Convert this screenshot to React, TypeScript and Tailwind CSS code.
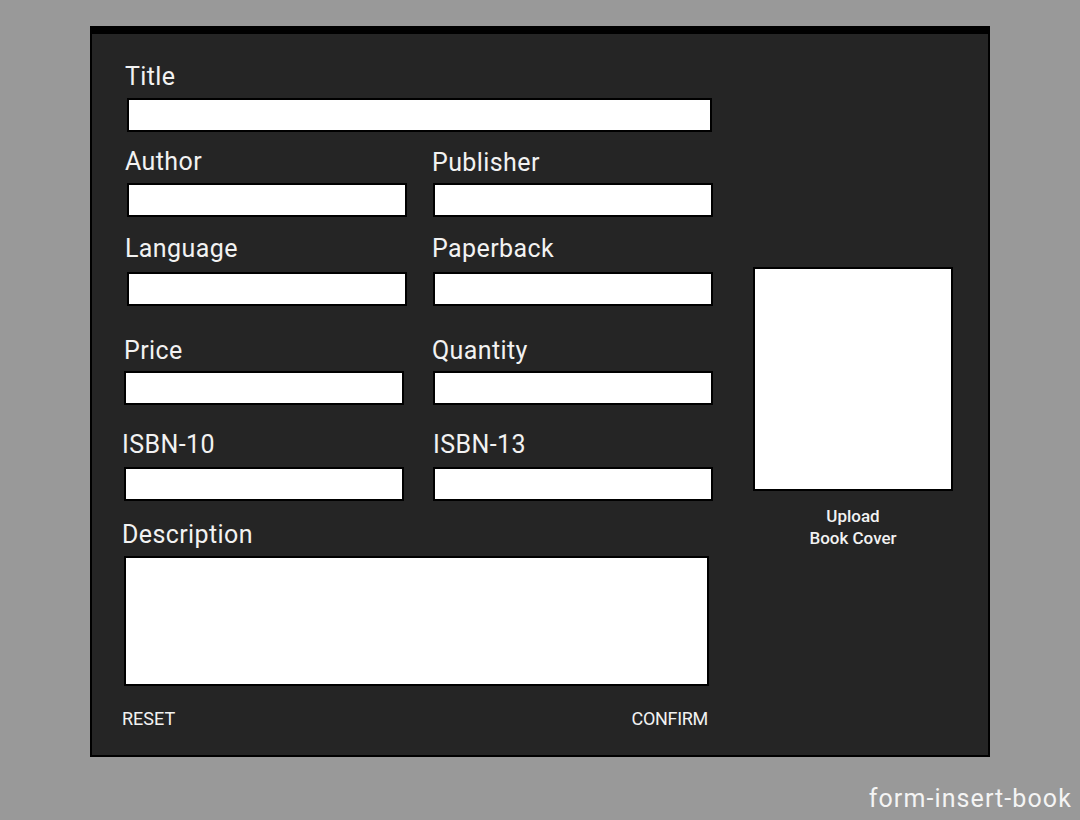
import React from 'react';

const font = { fontFamily: 'Roboto, "Liberation Sans", sans-serif' };

const labelCls = 'block text-[25px] leading-[28px] tracking-[0.4px] text-[#f2f2f2]';
const inputCls = 'block h-[34px] border-2 border-black bg-white outline-none';

const App: React.FC = () => {
  return (
    <div
      className="w-[1080px] h-[820px] bg-[#999999] pt-[26px] overflow-hidden"
      style={font}
    >
      <div className="ml-[90px] w-[900px] h-[731px] bg-[#252525] border-2 border-t-[8px] border-black flex items-start">
        {/* form fields */}
        <div className="w-[621px] pl-[30px] pt-[29px]">
          <label className={`${labelCls} ml-[3px]`}>Title</label>
          <input className={`${inputCls} mt-[7px] ml-[5px] w-[585px]`} />

          <div className="flex mt-[16px]">
            <div className="w-[311px]">
              <label className={`${labelCls} ml-[3px]`}>Author</label>
              <input className={`${inputCls} mt-[7px] ml-[5px] w-[280px]`} />
            </div>
            <div>
              <label className={`${labelCls} mt-[1px]`}>Publisher</label>
              <input className={`${inputCls} mt-[6px] ml-[1px] w-[280px]`} />
            </div>
          </div>

          <div className="flex mt-[18px]">
            <div className="w-[311px]">
              <label className={`${labelCls} ml-[3px]`}>Language</label>
              <input className={`${inputCls} mt-[9px] ml-[5px] w-[280px]`} />
            </div>
            <div>
              <label className={labelCls}>Paperback</label>
              <input className={`${inputCls} mt-[9px] ml-[1px] w-[280px]`} />
            </div>
          </div>

          <div className="flex mt-[31px]">
            <div className="w-[311px]">
              <label className={`${labelCls} ml-[2px]`}>Price</label>
              <input className={`${inputCls} mt-[6px] ml-[2px] w-[280px]`} />
            </div>
            <div>
              <label className={labelCls}>Quantity</label>
              <input className={`${inputCls} mt-[6px] ml-[1px] w-[280px]`} />
            </div>
          </div>

          <div className="flex mt-[26px]">
            <div className="w-[311px]">
              <label className={labelCls}>ISBN-10</label>
              <input className={`${inputCls} mt-[8px] ml-[2px] w-[280px]`} />
            </div>
            <div>
              <label className={`${labelCls} ml-[1px]`}>ISBN-13</label>
              <input className={`${inputCls} mt-[8px] ml-[1px] w-[280px]`} />
            </div>
          </div>

          <label className={`${labelCls} mt-[20px]`}>Description</label>
          <textarea
            className="block mt-[7px] ml-[2px] w-[585px] h-[130px] border-2 border-black bg-white resize-none outline-none"
          />

          <div className="flex justify-between w-[586px] mt-[23px]">
            <button className="text-[18px] leading-[20px] text-[#f2f2f2]">RESET</button>
            <button className="text-[18px] leading-[20px] tracking-[-0.3px] text-[#f2f2f2]">CONFIRM</button>
          </div>
        </div>

        {/* cover upload */}
        <div className="ml-[40px] mt-[233px] w-[200px] flex flex-col items-center">
          <div className="w-[200px] h-[224px] bg-white border-2 border-black" />
          <button className="mt-[14px] text-[17px] leading-[22px] font-medium text-[#f2f2f2] text-center">
            Upload
            <br />
            Book Cover
          </button>
        </div>
      </div>

      <div className="mt-[28px] pr-[8px] text-right text-[25px] leading-[28px] tracking-[1.1px] text-[#f4f4f4]">
        form-insert-book
      </div>
    </div>
  );
};

export default App;
